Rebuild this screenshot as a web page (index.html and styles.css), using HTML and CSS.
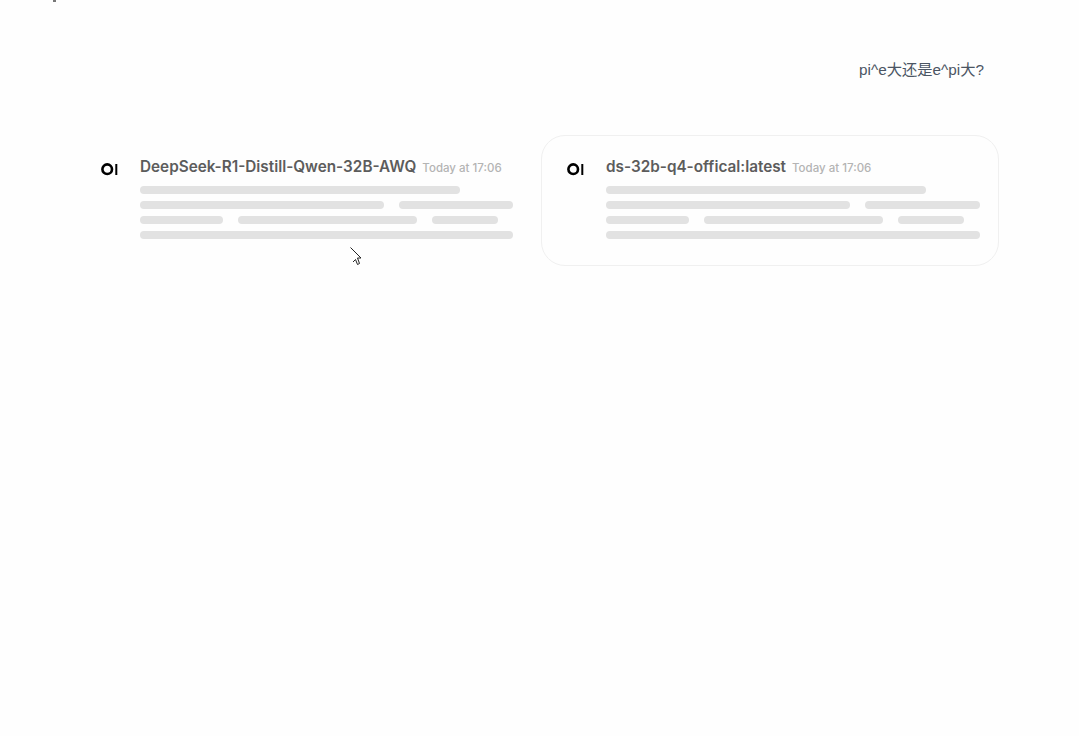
FILE: index.html
```html
<!DOCTYPE html>
<html lang="en">
<head>
    <meta charset="UTF-8">
    <meta name="viewport" content="width=device-width, initial-scale=1.0">
    <title>Chat</title>
    <link rel="stylesheet" href="styles.css">
</head>
<body>
    <span class="top-speck"></span>

    <div class="prompt">pi^e大还是e^pi大?</div>

    <div class="responses">
        <div class="response">
            <svg class="logo" viewBox="0 0 17 13" aria-hidden="true">
                <circle cx="6.2" cy="6.2" r="4.8" fill="none" stroke="#000" stroke-width="2.6"/>
                <rect x="14.3" y="1" width="2" height="11" fill="#000"/>
            </svg>
            <div class="body">
                <div class="meta">
                    <span class="model">DeepSeek-R1-Distill-Qwen-32B-AWQ</span>
                    <span class="time">Today at 17:06</span>
                </div>
                <div class="skeleton">
                    <div class="row"><div class="bar first"></div></div>
                    <div class="row"><div class="bar wide"></div><div class="bar rest"></div></div>
                    <div class="row"><div class="bar s1"></div><div class="bar s2"></div><div class="bar s3"></div></div>
                    <div class="row"><div class="bar rest"></div></div>
                </div>
            </div>
        </div>

        <div class="response selected">
            <svg class="logo" viewBox="0 0 17 13" aria-hidden="true">
                <circle cx="6.2" cy="6.2" r="4.8" fill="none" stroke="#000" stroke-width="2.6"/>
                <rect x="14.3" y="1" width="2" height="11" fill="#000"/>
            </svg>
            <div class="body">
                <div class="meta">
                    <span class="model">ds-32b-q4-offical:latest</span>
                    <span class="time">Today at 17:06</span>
                </div>
                <div class="skeleton">
                    <div class="row"><div class="bar first"></div></div>
                    <div class="row"><div class="bar wide"></div><div class="bar rest"></div></div>
                    <div class="row"><div class="bar s1"></div><div class="bar s2"></div><div class="bar s3"></div></div>
                    <div class="row"><div class="bar rest"></div></div>
                </div>
            </div>
        </div>
    </div>

    <svg class="cursor" viewBox="0 0 13 19" aria-hidden="true">
        <path d="M0.5 0.5 L11 11 L7.5 11 L9.5 16.5 L7.5 17.5 L5.5 12.5 L3 15" fill="#fff" stroke="#222" stroke-width="1"/>
    </svg>
</body>
</html>
```

FILE: styles.css
```css
body {
    margin: 0;
    height: 736px;
    overflow: hidden;
    background-color: #fefefe;
    font-family: Inter, "Noto Sans CJK SC", sans-serif;
}

.top-speck {
    position: absolute;
    left: 53px;
    top: 0;
    width: 3px;
    height: 2px;
    background-color: #777;
}

.prompt {
    display: flex;
    justify-content: flex-end;
    padding: 60px 95px 0 0;
    height: 135px;
    box-sizing: border-box;
    font-family: "Liberation Sans", "Noto Sans CJK SC", sans-serif;
    font-size: 15.3px;
    line-height: 20px;
    color: #4b5563;
}

.responses {
    display: flex;
    gap: 8px;
    padding-left: 75px;
}

.response {
    display: flex;
    width: 458px;
    height: 131px;
    box-sizing: border-box;
    padding: 20px 19px 0 25px;
    border: 1px solid transparent;
    border-radius: 24px;
}

.response.selected {
    padding-right: 18px;
    border-color: #f0f0f0;
}

.logo {
    width: 17px;
    height: 13px;
    margin-top: 7px;
    margin-right: 22px;
    flex-shrink: 0;
}

.body {
    flex: 1;
    min-width: 0;
}

.meta {
    display: flex;
    align-items: baseline;
    gap: 6px;
    height: 22px;
    line-height: 22px;
    white-space: nowrap;
}

.model {
    font-size: 15.3px;
    font-weight: 600;
    color: #5c5c5c;
}

.time {
    font-size: 11.5px;
    font-weight: 500;
    color: #b4b4b4;
}

.skeleton {
    display: flex;
    flex-direction: column;
    gap: 7px;
    margin-top: 8px;
}

.row {
    display: flex;
    gap: 15px;
}

.bar {
    height: 8px;
    border-radius: 4px;
    background-color: #e2e2e2;
}

.first {
    width: 320px;
}

.wide {
    width: 244px;
}

.rest {
    flex: 1;
}

.s1 {
    width: 83px;
}

.s2 {
    width: 179px;
}

.s3 {
    width: 66px;
}

.cursor {
    position: absolute;
    left: 350px;
    top: 247px;
    width: 13px;
    height: 19px;
}
```
